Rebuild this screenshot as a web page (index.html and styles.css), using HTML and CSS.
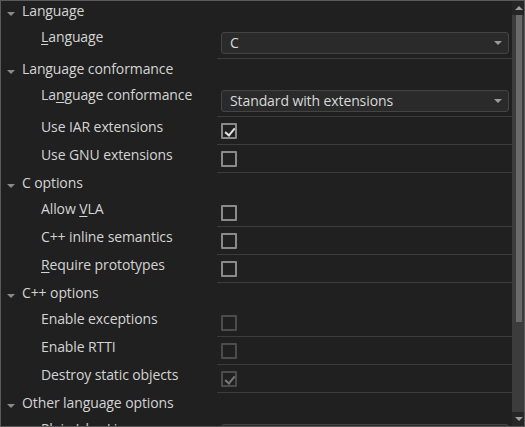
FILE: index.html
```html
<!DOCTYPE html>
<html>
<head>
<meta charset="utf-8">
<link rel="stylesheet" href="styles.css">
</head>
<body>
<div class="window">
  <div class="content">
    <div class="header"><span class="caret"></span>Language</div>
    <div class="row">
      <div class="label"><u>L</u>anguage</div>
      <div class="value combo-cell"><div class="combo"><span>C</span><span class="arrow"></span></div></div>
    </div>

    <div class="header"><span class="caret"></span>Language conformance</div>
    <div class="row">
      <div class="label">La<u>n</u>guage conformance</div>
      <div class="value combo-cell"><div class="combo"><span>Standard with extensions</span><span class="arrow"></span></div></div>
    </div>
    <div class="row">
      <div class="label">Use IAR extensions</div>
      <div class="value check-cell"><span class="check checked"></span></div>
    </div>
    <div class="row">
      <div class="label">Use GNU extensions</div>
      <div class="value check-cell"><span class="check"></span></div>
    </div>

    <div class="header"><span class="caret"></span>C options</div>
    <div class="row">
      <div class="label">Allow <u>V</u>LA</div>
      <div class="value check-cell"><span class="check"></span></div>
    </div>
    <div class="row">
      <div class="label">C++ inline semantics</div>
      <div class="value check-cell"><span class="check"></span></div>
    </div>
    <div class="row">
      <div class="label"><u>R</u>equire prototypes</div>
      <div class="value check-cell"><span class="check"></span></div>
    </div>

    <div class="header"><span class="caret"></span>C++ options</div>
    <div class="row">
      <div class="label">Enable exceptions</div>
      <div class="value check-cell"><span class="check disabled"></span></div>
    </div>
    <div class="row">
      <div class="label">Enable RTTI</div>
      <div class="value check-cell"><span class="check disabled"></span></div>
    </div>
    <div class="row">
      <div class="label">Destroy static objects</div>
      <div class="value check-cell"><span class="check disabled checked"></span></div>
    </div>

    <div class="header"><span class="caret"></span>Other language options</div>
    <div class="row">
      <div class="label">Plain 'char' is</div>
      <div class="value combo-cell"><div class="combo"><span>Signed</span><span class="arrow"></span></div></div>
    </div>
  </div>
  <div class="scrollbar">
    <div class="sb-btn"><span class="sb-up"></span></div>
    <div class="sb-track"><div class="sb-thumb"></div></div>
    <div class="sb-btn"><span class="sb-down"></span></div>
  </div>
</div>
</body>
</html>
```

FILE: styles.css
```css
* { box-sizing: border-box; }
html, body { margin: 0; padding: 0; background: #202020; }
body {
  font-family: "Open Sans", "Noto Sans", sans-serif;
  font-size: 14px;
  letter-spacing: -0.1px;
  color: #d4d4d4;
}
.window {
  width: 525px;
  height: 427px;
  border: 1px solid #5a5a5a;
  background: #202020;
  display: flex;
  overflow: hidden;
}
.content {
  width: 511px;
  flex: none;
  overflow: hidden;
}
.header {
  height: 26px;
  padding-top: 1px;
  line-height: 18px;
  padding-left: 21px;
  position: relative;
  white-space: nowrap;
}
.caret {
  position: absolute;
  left: 6px;
  top: 11px;
  width: 0;
  height: 0;
  border-left: 4px solid transparent;
  border-right: 4px solid transparent;
  border-top: 4px solid #8a8a8a;
}
.row {
  display: flex;
}
.label {
  width: 216px;
  flex: none;
  padding-left: 40px;
  padding-top: 1px;
  line-height: 18px;
  white-space: nowrap;
}
.label u { text-underline-offset: 2px; }
.value {
  flex: 1;
  border-bottom: 1px solid #3c3c3c;
  padding-left: 4px;
  padding-right: 3px;
}
.combo-cell { padding-top: 5px; padding-bottom: 4px; }
.check-cell { padding-top: 6px; padding-bottom: 5px; }
.combo {
  height: 22px;
  border: 1px solid #444444;
  border-radius: 3px;
  background: #2a2a2a;
  display: flex;
  align-items: center;
  justify-content: space-between;
  padding-left: 8px;
  padding-right: 6px;
  line-height: 18px;
  color: #d8d8d8;
}
.arrow {
  width: 0;
  height: 0;
  border-left: 4px solid transparent;
  border-right: 4px solid transparent;
  border-top: 4px solid #9a9a9a;
}
.check {
  display: block;
  width: 16px;
  height: 16px;
  border: 2px solid #8a8a8a;
  border-radius: 1px;
  position: relative;
}
.check.disabled { border-color: #4c4c4c; }
.check.checked::after {
  content: "";
  position: absolute;
  left: 4px;
  top: 1px;
  width: 4px;
  height: 8px;
  border-right: 2px solid #e0e0e0;
  border-bottom: 2px solid #e0e0e0;
  transform: rotate(40deg);
}
.check.disabled.checked::after { border-color: #767676; }
.scrollbar {
  width: 12px;
  flex: none;
  display: flex;
  flex-direction: column;
  background: #262626;
}
.sb-btn {
  height: 14px;
  flex: none;
  display: flex;
  align-items: center;
  justify-content: center;
  padding-left: 2px;
}
.sb-up {
  width: 0; height: 0;
  border-left: 4px solid transparent;
  border-right: 4px solid transparent;
  border-bottom: 4px solid #a0a0a0;
}
.sb-down {
  width: 0; height: 0;
  border-left: 4px solid transparent;
  border-right: 4px solid transparent;
  border-top: 4px solid #a0a0a0;
}
.sb-track {
  flex: 1;
  background: #3c3c3c;
  padding-left: 4px;
  padding-right: 2px;
}
.sb-thumb {
  height: 307px;
  background: #6a6a6a;
}
```
